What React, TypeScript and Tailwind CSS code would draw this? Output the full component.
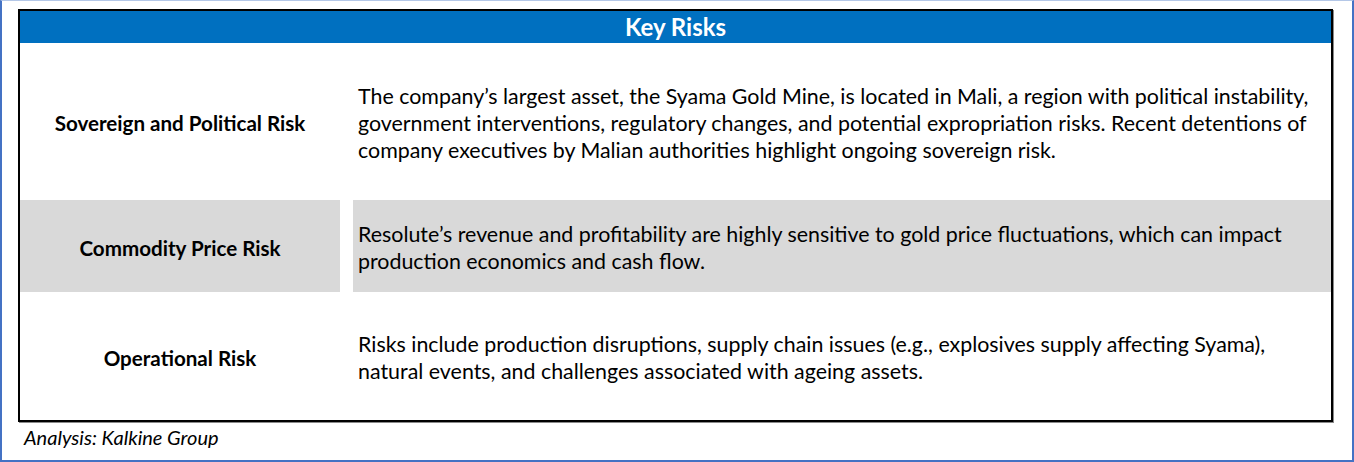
const rows = [
  {
    label: 'Sovereign and Political Risk',
    text: 'The company’s largest asset, the Syama Gold Mine, is located in Mali, a region with political instability, government interventions, regulatory changes, and potential expropriation risks. Recent detentions of company executives by Malian authorities highlight ongoing sovereign risk.',
    height: 'h-[157px]',
    shaded: false,
  },
  {
    label: 'Commodity Price Risk',
    text: 'Resolute’s revenue and profitability are highly sensitive to gold price fluctuations, which can impact production economics and cash flow.',
    height: 'h-[92px]',
    shaded: true,
  },
  {
    label: 'Operational Risk',
    text: 'Risks include production disruptions, supply chain issues (e.g., explosives supply affecting Syama), natural events, and challenges associated with ageing assets.',
    height: 'h-[128px]',
    shaded: false,
  },
];

export default function App() {
  return (
    <div
      className="box-border h-[462px] w-[1354px] overflow-hidden border-x-2 border-b-2 border-t border-[#4472C4] border-t-[#b4c7e7] bg-white pl-[16px] pt-[8px] text-black"
      style={{ fontFamily: 'Lato, "Open Sans", sans-serif' }}
    >
      <div className="box-border flex h-[413px] w-[1315px] flex-col border-2 border-black shadow-[1px_1px_0_#8a8a8a]">
        <div className="flex h-[32px] items-center justify-center bg-[#0070C0] text-[24px] font-bold text-white">
          Key Risks
        </div>
        {rows.map((r) => (
          <div key={r.label} className={`flex ${r.height}`}>
            <div
              className={`flex w-[320px] items-center justify-center pt-[4px] text-[20.6px] font-bold ${
                r.shaded ? 'bg-[#d9d9d9]' : ''
              }`}
            >
              {r.label}
            </div>
            <div className="w-[13px]" />
            <div
              className={`flex flex-1 items-center pl-[5px] pr-[12px] pt-[3px] text-[21.4px] leading-[27px] ${
                r.shaded ? 'bg-[#d9d9d9]' : ''
              }`}
            >
              <p>{r.text}</p>
            </div>
          </div>
        ))}
      </div>
      <div className="pl-[6px] pt-[3px] text-[20px] italic leading-[24px]">Analysis: Kalkine Group</div>
    </div>
  );
}
